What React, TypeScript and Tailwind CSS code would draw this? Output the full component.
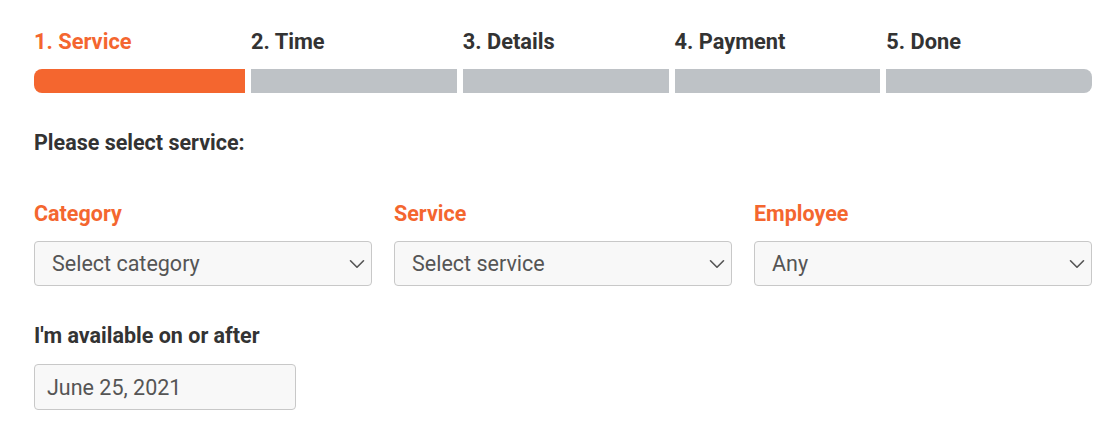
import { ChevronDown } from "lucide-react";

const steps = ["1. Service", "2. Time", "3. Details", "4. Payment", "5. Done"];

function SelectBox({ label, value }: { label: string; value: string }) {
  return (
    <div className="flex flex-col">
      <label className="text-[21.5px] font-bold leading-[30px] text-[#f4662f]">{label}</label>
      <div className="mt-[12px] flex h-[45px] items-center justify-between rounded-[4px] border border-[#c8c8c8] bg-[#f8f8f8] pl-[17px] pr-[1px]">
        <span className="pt-[2px] text-[21.5px] text-[#555]">{value}</span>
        <ChevronDown className="h-[26px] w-[26px] text-[#555]" strokeWidth={1.5} />
      </div>
    </div>
  );
}

export default function App() {
  return (
    <div
      className="min-h-[437px] bg-white pl-[34px] pr-[24px] pt-[27px] text-[#333]"
      style={{ fontFamily: "Roboto, 'Liberation Sans', sans-serif" }}
    >
      <div className="grid grid-cols-[211px_repeat(4,1fr)] gap-x-[6px]">
        {steps.map((s, i) => (
          <div key={s} className="flex flex-col">
            <span
              className={`text-[21.8px] font-bold leading-[30px] ${i === 0 ? "text-[#f4662f]" : "text-[#333]"}`}
            >
              {s}
            </span>
            <div
              className={`mt-[12px] h-[24px] ${
                i === 0
                  ? "rounded-l-[8px] bg-[#f4662f]"
                  : i === 4
                  ? "rounded-r-[8px] bg-[#bec2c6]"
                  : "bg-[#bec2c6]"
              }`}
            />
          </div>
        ))}
      </div>

      <div className="mt-[35px] text-[21.5px] font-bold leading-[30px]">Please select service:</div>

      <div className="mt-[41px] grid grid-cols-3 gap-x-[22px]">
        <SelectBox label="Category" value="Select category" />
        <SelectBox label="Service" value="Select service" />
        <SelectBox label="Employee" value="Any" />
      </div>

      <div className="mt-[35px] text-[21.5px] font-bold leading-[30px]">I'm available on or after</div>
      <div className="mt-[13px] flex h-[46px] w-[262px] items-center rounded-[4px] border border-[#c8c8c8] bg-[#f8f8f8] pl-[12px]">
        <span className="pt-[2px] text-[21.5px] text-[#555]">June 25, 2021</span>
      </div>
    </div>
  );
}
